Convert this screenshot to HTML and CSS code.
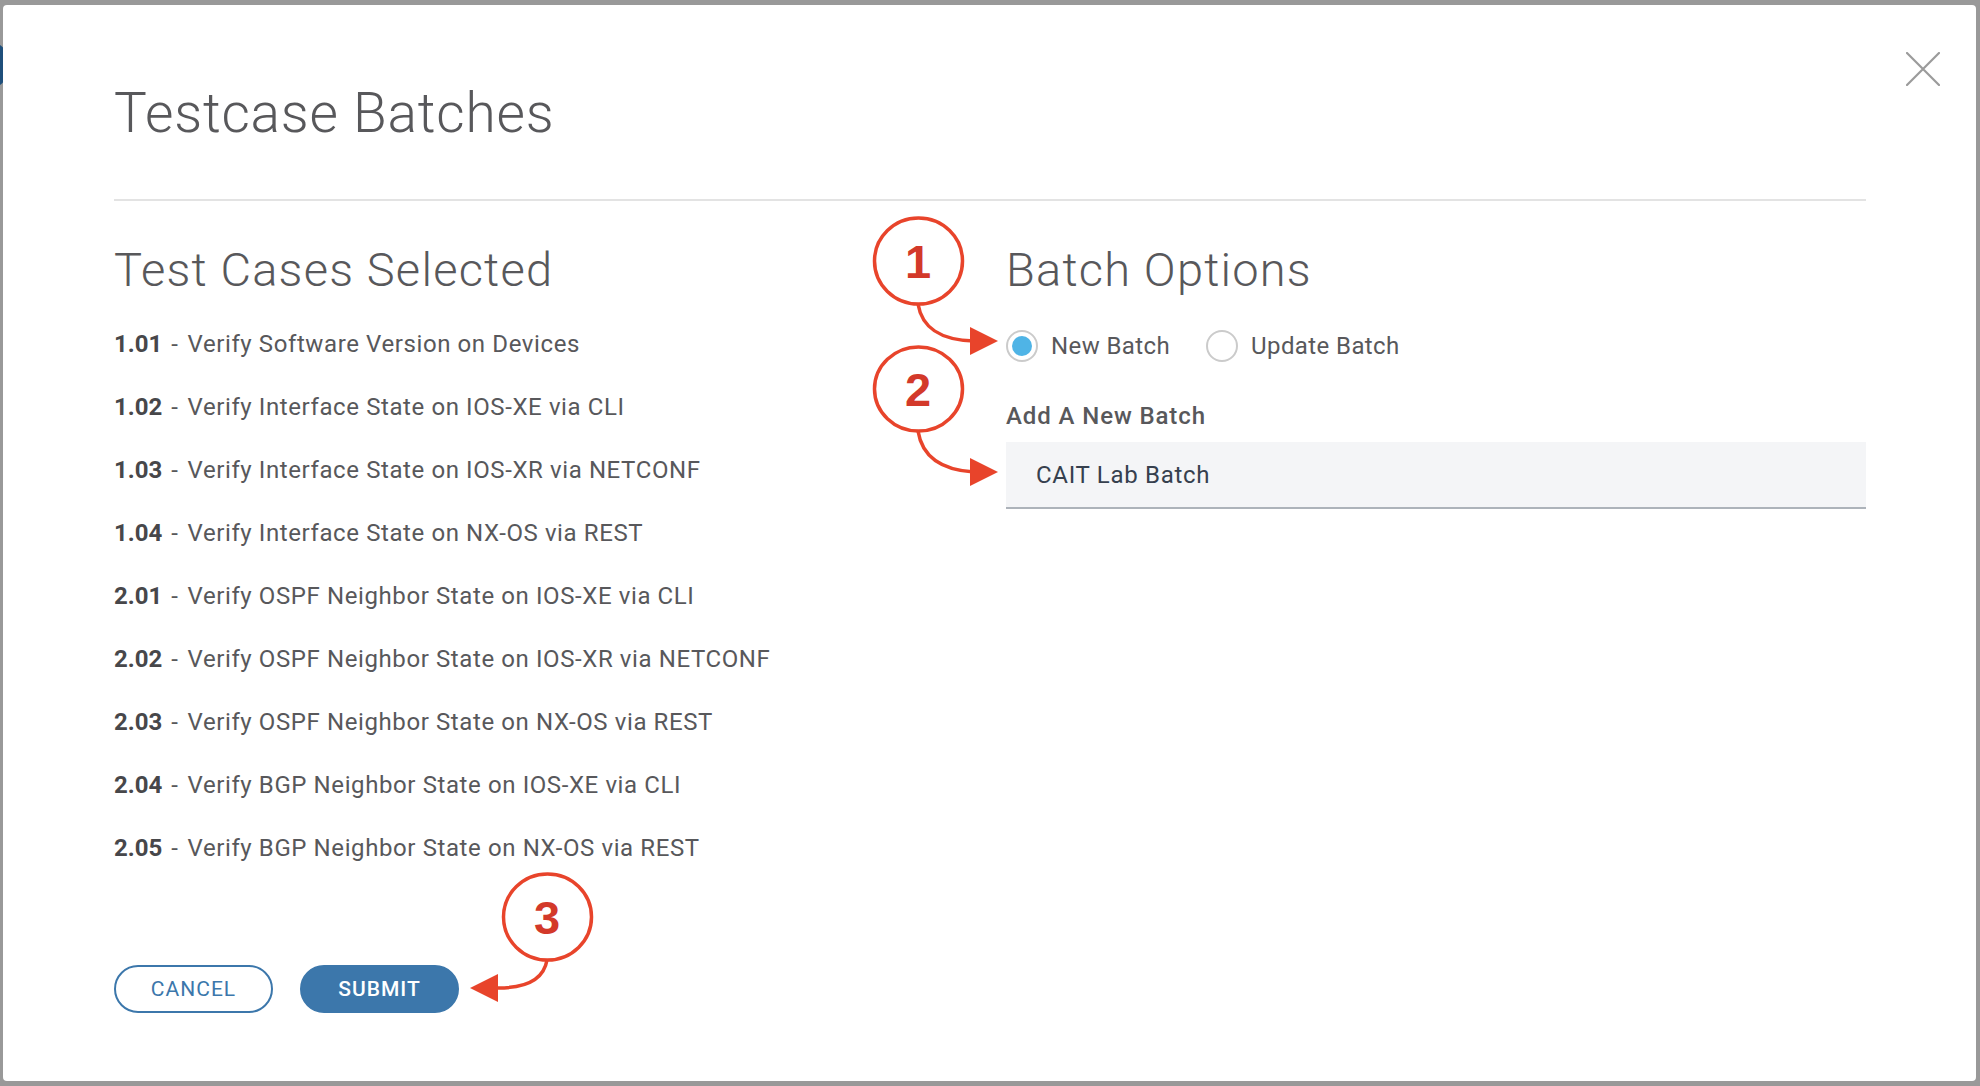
FILE: index.html
```html
<!DOCTYPE html>
<html lang="en">
<head>
  <meta charset="UTF-8">
  <meta name="viewport" content="width=device-width, initial-scale=1.0">
  <title>Testcase Batches</title>
  <link rel="stylesheet" href="styles.css">
</head>
<body>

  <!-- page behind the overlay, mostly hidden -->
  <div class="behind-dot"></div>

  <!-- Modal -->
  <div class="modal">
    <button class="close" type="button" aria-label="Close">
      <svg width="34" height="34" viewBox="0 0 34 34"><path d="M1 1L33 33M33 1L1 33" stroke="#9b9b9b" stroke-width="2.2" stroke-linecap="round"/></svg>
    </button>

    <h1 class="modal-title">Testcase Batches</h1>
    <hr class="divider">

    <div class="columns">
      <!-- Selected test cases -->
      <section class="cases">
        <h2 class="section-title">Test Cases Selected</h2>
        <ul class="case-list">
          <li><b>1.01</b><span class="dash">-</span>Verify Software Version on Devices</li>
          <li><b>1.02</b><span class="dash">-</span>Verify Interface State on IOS-XE via CLI</li>
          <li><b>1.03</b><span class="dash">-</span>Verify Interface State on IOS-XR via NETCONF</li>
          <li><b>1.04</b><span class="dash">-</span>Verify Interface State on NX-OS via REST</li>
          <li><b>2.01</b><span class="dash">-</span>Verify OSPF Neighbor State on IOS-XE via CLI</li>
          <li><b>2.02</b><span class="dash">-</span>Verify OSPF Neighbor State on IOS-XR via NETCONF</li>
          <li><b>2.03</b><span class="dash">-</span>Verify OSPF Neighbor State on NX-OS via REST</li>
          <li><b>2.04</b><span class="dash">-</span>Verify BGP Neighbor State on IOS-XE via CLI</li>
          <li><b>2.05</b><span class="dash">-</span>Verify BGP Neighbor State on NX-OS via REST</li>
        </ul>
      </section>

      <!-- Batch options -->
      <section class="options">
        <h2 class="section-title">Batch Options</h2>
        <div class="radio-row">
          <label class="radio"><span class="radio-mark checked"></span>New Batch</label>
          <label class="radio"><span class="radio-mark"></span>Update Batch</label>
        </div>
        <div class="field-label">Add A New Batch</div>
        <div class="text-input">CAIT Lab Batch</div>
      </section>
    </div>

    <div class="actions">
      <button type="button" class="btn btn-outline">Cancel</button>
      <button type="button" class="btn btn-primary">Submit</button>
    </div>
  </div>

  <!-- Red callouts drawn over the screenshot -->
  <svg class="callouts" width="1980" height="1086" viewBox="0 0 1980 1086">
    <g fill="none" stroke="#e8442b" stroke-width="3.5">
      <ellipse cx="918.5" cy="261" rx="44" ry="43"/>
      <ellipse cx="918.5" cy="389" rx="44" ry="42"/>
      <ellipse cx="547.5" cy="917" rx="44" ry="43"/>
      <path d="M918 304C922 328 940 340 974 341"/>
      <path d="M918 431C922 456 940 470 974 472"/>
      <path d="M547 960C544 978 528 988 498 988"/>
    </g>
    <g fill="#e8442b">
      <path d="M998 341L970 327L970 355Z"/>
      <path d="M998 472L970 458L970 486Z"/>
      <path d="M470 988L498 974L498 1002Z"/>
    </g>
    <g class="callout-num" text-anchor="middle">
      <text x="918" y="278">1</text>
      <text x="918" y="406">2</text>
      <text x="547" y="934">3</text>
    </g>
  </svg>

</body>
</html>
```

FILE: styles.css
```css
/* Global styling */
body { margin: 0; height: 1086px; overflow: hidden; background-color: #999999; font-family: Roboto, "Liberation Sans", sans-serif; color: #58585b; position: relative; }
.behind-dot { position: absolute; left: -40px; top: 40px; width: 50px; height: 50px; border-radius: 50%; background-color: #1f4f7b; }

/* Modal */
.modal { position: relative; margin: 5px 4px 0 3px; height: 1076px; box-sizing: border-box; padding: 75px 110px 0 111px; background-color: #fff; border-radius: 4px; }
.close { position: absolute; top: 47px; right: 36px; width: 34px; height: 34px; padding: 0; border: none; background: none; cursor: pointer; }
.close svg { display: block; }
.modal-title { margin: 0; font-size: 55px; line-height: 66px; font-weight: 300; letter-spacing: 0.8px; color: #58585b; }
.divider { margin: 53px 0 0; border: none; height: 2px; background-color: #e3e3e3; }

/* Columns */
.columns { display: grid; grid-template-columns: 892px 860px; margin-top: 41px; }
.section-title { margin: 0; font-size: 47px; line-height: 56px; font-weight: 300; letter-spacing: 1.2px; color: #58585b; }

.case-list { list-style: none; margin: 15px 0 0; padding: 0; }
.case-list li { font-size: 24px; line-height: 63px; letter-spacing: 0.6px; white-space: nowrap; }
.case-list b { font-weight: 700; letter-spacing: 0; color: #47474a; }
.dash { margin: 0 9px 0 9px; }

/* Radios and input */
.radio-row { display: flex; align-items: center; gap: 36px; height: 63px; margin-top: 15px; padding-top: 3px; box-sizing: border-box; }
.radio { display: flex; align-items: center; gap: 13px; font-size: 24px; letter-spacing: 0.4px; cursor: pointer; }
.radio-mark { width: 32px; height: 32px; box-sizing: border-box; border: 2px solid #cbcbcb; border-radius: 50%; display: flex; align-items: center; justify-content: center; }
.radio-mark.checked::after { content: ""; width: 20px; height: 20px; border-radius: 50%; background-color: #4fb4e6; }

.field-label { margin-top: 25px; font-size: 24px; line-height: 30px; font-weight: 500; letter-spacing: 0.9px; color: #58585b; }
.text-input { margin-top: 11px; height: 67px; box-sizing: border-box; padding: 0 30px; display: flex; align-items: center; background-color: #f4f5f7; border-bottom: 2px solid #adb3ba; font-size: 24px; letter-spacing: 0.7px; color: #36404e; }

/* Buttons */
.actions { display: flex; gap: 27px; margin-top: 85px; }
.btn { width: 159px; height: 48px; border-radius: 24px; font-family: Roboto, "Liberation Sans", sans-serif; font-size: 21px; letter-spacing: 1px; text-transform: uppercase; cursor: pointer; }
.btn-outline { background-color: #fff; color: #3c77ab; border: 2px solid #3c77ab; font-weight: 400; }
.btn-primary { background-color: #3c77ab; color: #fff; border: 2px solid #3c77ab; font-weight: 500; }

/* Callouts */
.callouts { position: absolute; left: 0; top: 0; pointer-events: none; }
.callout-num text { font-family: "Liberation Sans", Arial, sans-serif; font-size: 47px; font-weight: 700; fill: #d3392a; }
```
